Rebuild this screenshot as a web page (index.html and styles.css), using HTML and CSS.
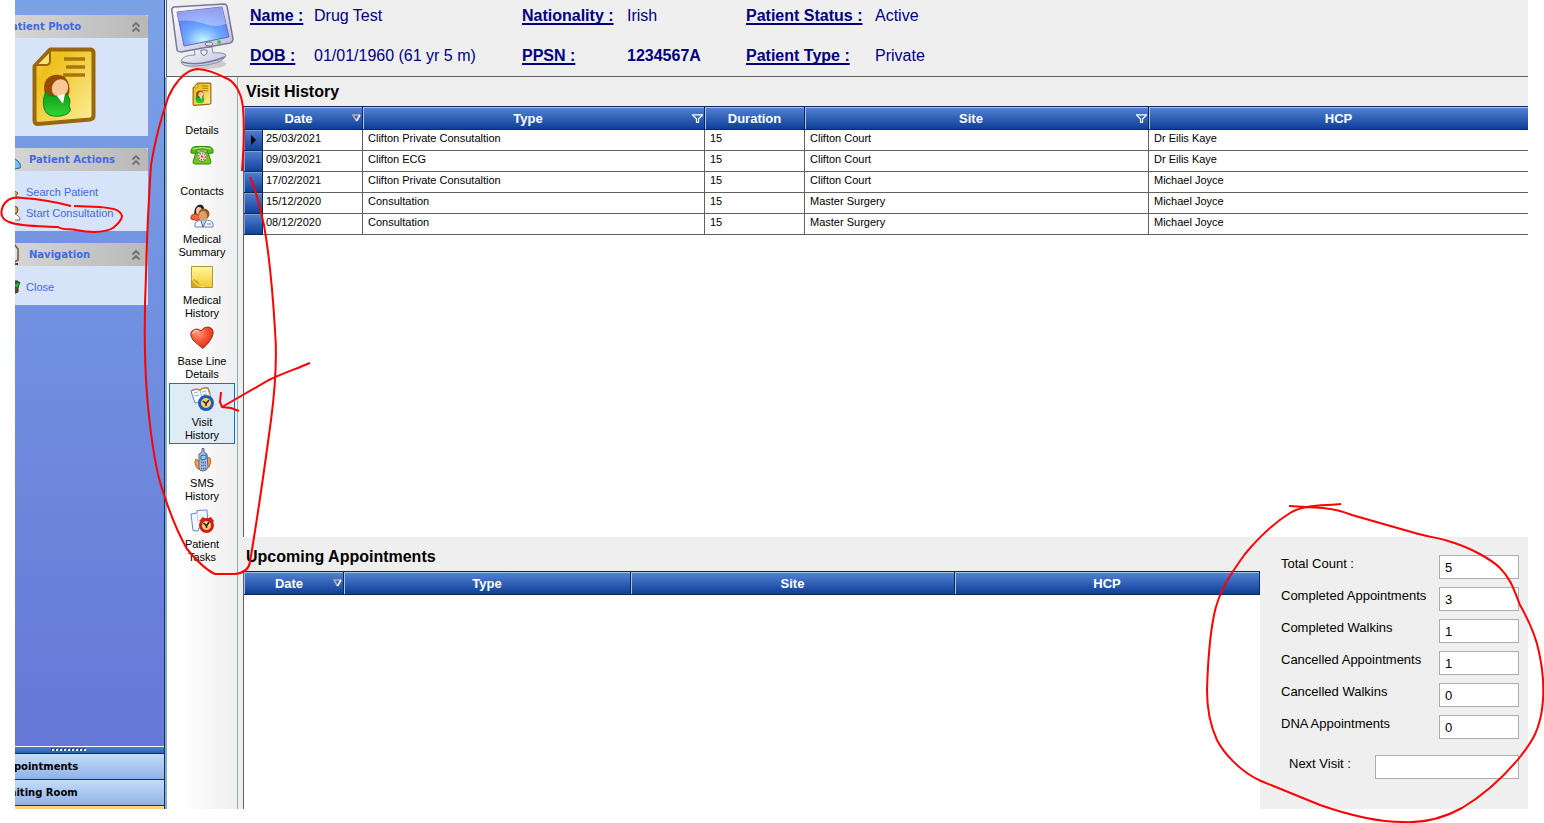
FILE: index.html
```html
<!DOCTYPE html>
<html lang="en">
<head>
    <meta charset="UTF-8">
    <meta name="viewport" content="width=device-width, initial-scale=1.0">
    <title>Patient - Visit History</title>
    <link rel="stylesheet" href="styles.css">
</head>
<body>
    <!-- shared icons -->
    <svg class="defs" width="0" height="0" aria-hidden="true">
        <defs>
            <linearGradient id="gold" x1="0" y1="0" x2="1" y2="1">
                <stop offset="0" stop-color="#f3cf3c"/><stop offset=".25" stop-color="#edc01c"/><stop offset="1" stop-color="#fdf0a0"/>
            </linearGradient>
            <linearGradient id="green" x1="0" y1="0" x2="0" y2="1">
                <stop offset="0" stop-color="#0a9a14"/><stop offset="1" stop-color="#35d435"/>
            </linearGradient>
            <linearGradient id="note" x1="0" y1="0" x2="0" y2="1">
                <stop offset="0" stop-color="#fff7a0"/><stop offset="1" stop-color="#f0cb2c"/>
            </linearGradient>
            <radialGradient id="screen" cx=".5" cy=".85" r=".9">
                <stop offset="0" stop-color="#c8f4ff"/><stop offset=".4" stop-color="#6aa5ff"/><stop offset="1" stop-color="#5560e8"/>
            </radialGradient>
            <linearGradient id="frame" x1="0" y1="0" x2="1" y2="1">
                <stop offset="0" stop-color="#ffffff"/><stop offset="1" stop-color="#bcbcdc"/>
            </linearGradient>
            <radialGradient id="red" cx=".35" cy=".3" r=".8">
                <stop offset="0" stop-color="#ff9a78"/><stop offset=".5" stop-color="#fa5030"/><stop offset="1" stop-color="#d02c10"/>
            </radialGradient>
        </defs>
        <symbol id="card" viewBox="0 0 64 80">
            <path d="M18 3.500H58Q61.500 3.500 61.500 7V70Q61.500 73 58 73.500L6 78Q2.500 78 2.500 74V20Z" fill="url(#gold)" stroke="#9a680c" stroke-width="4" stroke-linejoin="round"/>
            <path d="M18 5V15Q18 19 14 19H4Z" fill="#fbe272" stroke="#9a680c" stroke-width="2"/>
            <path d="M32 13H53M34 21H53M31 29H53" stroke="#a8770c" stroke-width="3.500"/>
            <path d="M13 49Q9 32 22 29Q34 27 37 39Q39 48 34 54Z" fill="#984a08"/>
            <ellipse cx="28" cy="42" rx="8" ry="9" fill="#f8c898" transform="rotate(25 28 42)"/>
            <path d="M14 46Q19 52 25 50L31 58L33 48Q40 51 37 60Q42 67 29 70Q14 72 12 62Q10 52 14 46Z" fill="url(#green)" stroke="#078a10"/>
            <path d="M25 50L33 48L31 58Z" fill="#fff"/>
        </symbol>
        <symbol id="up" viewBox="0 0 10 12">
            <path d="M1.500 5.500L5 2L8.500 5.500M1.500 10.500L5 7L8.500 10.500" fill="none" stroke="#707070" stroke-width="1.800"/>
        </symbol>
        <symbol id="filter" viewBox="0 0 11 9">
            <path d="M.5 .8H10.500L6.500 5V8.500H4.500V5Z" fill="none" stroke="#fff" stroke-width="1.200"/>
        </symbol>
        <symbol id="sort" viewBox="0 0 9 8">
            <path d="M8 1H1L4.500 7" fill="none" stroke="#b5b0a8" stroke-width="1.500"/>
            <path d="M8 1L4.500 7" fill="none" stroke="#fff" stroke-width="1.500"/>
        </symbol>
    </svg>

    <div class="app">
        <aside class="sidebar">
            <div class="panels">
                <section class="panel">
                    <h2><span>Patient Photo</span><svg class="up"><use href="#up"/></svg></h2>
                    <div class="photo"><svg width="64" height="80"><use href="#card"/></svg></div>
                </section>
                <section class="panel">
                    <h2 class="with-icon">
                        <svg width="22" height="22" viewBox="0 0 22 22"><path d="M0 19V12Q10 5 18 12Q22 16 20 19Q10 22 0 19Z" fill="#70c0f0" stroke="#28689c"/><circle cx="9" cy="6" r="5" fill="#e8b080"/></svg>
                        <span>Patient Actions</span><svg class="up"><use href="#up"/></svg>
                    </h2>
                    <div class="links">
                        <a href="#"><svg width="16" height="16" viewBox="0 0 16 16"><path d="M6 5L13 9L10 13Z" fill="#efa040" stroke="#805020"/><path d="M8 11L15 14H6Z" fill="#fff" stroke="#777"/></svg>Search Patient</a>
                        <a href="#"><svg width="16" height="16" viewBox="0 0 16 16"><circle cx="9" cy="5" r="4" fill="#d89860" stroke="#704020"/><path d="M5 14Q8 7 12 10Q16 12 15 15H5Z" fill="#fff" stroke="#777"/></svg>Start Consultation</a>
                    </div>
                </section>
                <section class="panel">
                    <h2 class="with-icon">
                        <svg width="22" height="22" viewBox="0 0 22 22"><path d="M4 3L14 0L18 5V16L14 18H4Z" fill="#c8e8ff" stroke="#7a5020" stroke-width="1.500"/><path d="M14 20H18" stroke="#444" stroke-width="2"/></svg>
                        <span>Navigation</span><svg class="up"><use href="#up"/></svg>
                    </h2>
                    <div class="links">
                        <a href="#"><svg width="16" height="16" viewBox="0 0 16 16"><path d="M8 2H13V13L8 15Z" fill="#704818" stroke="#333"/><path d="M9 5L15 3L13 9L10 8Z" fill="#28b838" stroke="#146020"/></svg>Close</a>
                    </div>
                </section>
            </div>
            <div class="modules">
                <div class="grip"></div>
                <button type="button">Appointments</button>
                <button type="button">Waiting Room</button>
                <div class="active-module"></div>
            </div>
        </aside>

        <main class="main">
            <header class="patient">
                <svg class="monitor" width="66" height="70" viewBox="0 -3 66 70">
                    <ellipse cx="34" cy="61" rx="21" ry="5" fill="#aaa" opacity=".5"/>
                    <path d="M10 58Q12 52 24 52L23 45L41 44L42 50Q55 49 55 53Q50 62 24 63Q10 64 10 58Z" fill="url(#frame)" stroke="#8c8cae"/>
                    <path d="M11 59Q28 64 54 54" fill="none" stroke="#77779c" stroke-width="1.500"/>
                    <path d="M30 47H36V50Q33 55 30 50Z" fill="#eee" stroke="#77779c"/>
                    <path d="M1 8Q0 5 3 4L53 1Q55 1 56 3L62 36Q62 39 59 40L10 49Q7 49 6 47Z" fill="url(#frame)" stroke="#77779c" stroke-width="1.500"/>
                    <path d="M6 9L51 4L58 34L13 43Z" fill="url(#screen)" stroke="#6868b8"/>
                    <path d="M6 9L51 4L55 21Q45 25 34 21Q20 16 8 18Z" fill="#fff" opacity=".35"/>
                    <ellipse cx="38" cy="41" rx="4" ry="2" fill="#ddd" stroke="#777"/>
                    <circle cx="48" cy="39" r="2" fill="#40c840"/>
                </svg>
                <dl>
                    <dt>Name :</dt><dd>Drug Test</dd>
                    <dt>Nationality :</dt><dd>Irish</dd>
                    <dt>Patient Status :</dt><dd>Active</dd>
                    <dt>DOB :</dt><dd>01/01/1960 (61 yr 5 m)</dd>
                    <dt>PPSN :</dt><dd class="strong">1234567A</dd>
                    <dt>Patient Type :</dt><dd>Private</dd>
                </dl>
            </header>

            <div class="body">
                <nav class="tabs">
                    <button type="button"><svg width="20" height="24"><use href="#card"/></svg><span>Details</span></button>
                    <button type="button">
                        <svg width="24" height="24" viewBox="0 0 24 24">
                            <path d="M6 9L18 9L21 19Q21 21 19 21H5Q3 21 3 19Z" fill="#6ccc1c" stroke="#2e8a08"/>
                            <path d="M1 10Q0 4 6 3.500H18Q24 4 23 10L18 10.500L17 7H7L6 10.500Z" fill="#58bc14" stroke="#2e8a08"/>
                            <path d="M3 6Q12 3 21 6" fill="none" stroke="#b8f078"/>
                            <circle cx="12" cy="13.500" r="5" fill="#f0ead8" stroke="#7c8048"/>
                            <circle cx="12" cy="13.500" r="3.300" fill="none" stroke="#86744c" stroke-width="1.600" stroke-dasharray="1.500 1"/>
                            <circle cx="12" cy="13.500" r="1.300" fill="#d05020"/>
                        </svg>
                        <span>Contacts</span>
                    </button>
                    <button type="button">
                        <svg width="24" height="24" viewBox="0 0 24 24">
                            <path d="M4 12Q4 1 10 .5Q16 1 14 11Z" fill="#222"/>
                            <ellipse cx="9" cy="7" rx="3" ry="4" fill="#f4c49a"/>
                            <path d="M1 15Q0 10 6 10L12 12V16Q5 17 1 15Z" fill="#f06838" stroke="#b43c14"/>
                            <path d="M5 23V19Q9 15 14 16Q23 16 23 20V23Z" fill="#f4f7ff" stroke="#7884a4"/>
                            <circle cx="14" cy="10" r="5.500" fill="#945c24"/>
                            <ellipse cx="13" cy="12" rx="4" ry="5" fill="#dda06c"/>
                            <path d="M11 17L13 23L16 17" fill="#b8dcff" stroke="#3a64a8"/>
                            <path d="M17 20H21" stroke="#6678a8"/>
                        </svg>
                        <span>Medical Summary</span>
                    </button>
                    <button type="button">
                        <svg width="24" height="24" viewBox="0 0 24 24">
                            <path d="M1.500 1.500H22.500V22.500H1.500Z" fill="url(#note)" stroke="#b09440"/>
                            <path d="M2 11Q3 15 8 16Q9 20 15 22H2Z" fill="#d9a81c"/>
                            <path d="M2 12Q3 20 14 22" fill="none" stroke="#fff09a"/>
                        </svg>
                        <span>Medical History</span>
                    </button>
                    <button type="button">
                        <svg width="24" height="24" viewBox="0 0 24 24">
                            <path d="M13 22.500Q8 19 3 14Q-1 8 2 5Q7 1 11 5Q13 1 18 1Q24 2 23 8Q22 14 13 22.500Z" fill="url(#red)" stroke="#8e3420"/>
                            <path d="M3 8Q4 4 8 5" fill="none" stroke="#ffc8b0" stroke-width="1.500"/>
                        </svg>
                        <span>Base Line Details</span>
                    </button>
                    <button type="button" class="selected">
                        <svg width="24" height="24" viewBox="0 0 24 24">
                            <path d="M1 4Q5 1 10 3Q13 0 18 1L22 14Q17 13 13 17Q9 14 5 16Z" fill="#f7fbff" stroke="#5d87bf"/>
                            <path d="M10 3L13 15M4 6L8 5M4.500 9L9 8M12 5L16 4M13 8L17 7" fill="none" stroke="#8fb5e0"/>
                            <path d="M1 4Q5 1 10 3Q13 0 18 1L20 7" fill="none" stroke="#c08a38" stroke-width="1.500"/>
                            <circle cx="16" cy="16" r="6.500" fill="#f6cf68" stroke="#2458c0" stroke-width="3"/>
                            <path d="M13 14L16 16.500L19 13M16 16.500V19" fill="none" stroke="#222" stroke-width="1.500"/>
                        </svg>
                        <span>Visit History</span>
                    </button>
                    <button type="button">
                        <svg width="24" height="24" viewBox="0 0 24 24">
                            <path d="M5 14L6 11L9 13L17 9L20 10Q22 14 19 19Q14 23 8 21Q5 18 5 14Z" fill="#efa050" stroke="#bb6820"/>
                            <path d="M9 6L12 4V0.500H14V4L17 6L18 19Q17 23 13 23Q9 23 9 20Z" fill="#a8bcdc" stroke="#536c98"/>
                            <path d="M11 7.500L16 7V11L11 12Z" fill="#80d8ff" stroke="#41669c"/>
                            <path d="M11 14.500H16M11 17.500H16M11 20.500H16" stroke="#53698e" stroke-width="1.500" stroke-dasharray="1.300 .6"/>
                        </svg>
                        <span>SMS History</span>
                    </button>
                    <button type="button">
                        <svg width="24" height="24" viewBox="0 0 24 24">
                            <path d="M1 5L7 4V1.500L17 1L18 18L9 19L8 22L3 21.500Z" fill="#f4f8ff" stroke="#6588c8"/>
                            <path d="M7 4L8 13" stroke="#b8cce8"/>
                            <path d="M9 12L13 8L16 10L21 8L24 12L22 15Z" fill="#d82018"/>
                            <circle cx="16.500" cy="16.500" r="6" fill="#ffd070" stroke="#cc2018" stroke-width="3"/>
                            <path d="M13.500 14L16.500 17L19 13M16.500 17V19" fill="none" stroke="#222" stroke-width="1.500"/>
                        </svg>
                        <span>Patient Tasks</span>
                    </button>
                </nav>

                <div class="content">
                    <section class="visits">
                        <h1>Visit History</h1>
                        <table class="grid">
                            <colgroup><col class="w-mark"><col class="w-date"><col class="w-type"><col class="w-duration"><col class="w-site"><col></colgroup>
                            <thead>
                                <tr>
                                    <th colspan="2"><div><span>Date</span><svg width="9" height="8"><use href="#sort"/></svg></div></th>
                                    <th><div><span>Type</span><svg width="11" height="9"><use href="#filter"/></svg></div></th>
                                    <th><div><span>Duration</span></div></th>
                                    <th><div><span>Site</span><svg width="11" height="9"><use href="#filter"/></svg></div></th>
                                    <th><div><span>HCP</span></div></th>
                                </tr>
                            </thead>
                            <tbody>
                                <tr><td class="mark"><svg width="5" height="10" viewBox="0 0 5 10"><path d="M0 0L5 5L0 10Z"/></svg></td><td class="date">25/03/2021</td><td>Clifton Private Consutaltion</td><td>15</td><td>Clifton Court</td><td>Dr Eilis Kaye</td></tr>
                                <tr><td class="mark"></td><td class="date">09/03/2021</td><td>Clifton ECG</td><td>15</td><td>Clifton Court</td><td>Dr Eilis Kaye</td></tr>
                                <tr><td class="mark"></td><td class="date">17/02/2021</td><td>Clifton Private Consutaltion</td><td>15</td><td>Clifton Court</td><td>Michael Joyce</td></tr>
                                <tr><td class="mark"></td><td class="date">15/12/2020</td><td>Consultation</td><td>15</td><td>Master Surgery</td><td>Michael Joyce</td></tr>
                                <tr><td class="mark"></td><td class="date">08/12/2020</td><td>Consultation</td><td>15</td><td>Master Surgery</td><td>Michael Joyce</td></tr>
                            </tbody>
                        </table>
                    </section>

                    <div class="lower">
                        <section class="upcoming">
                            <h1>Upcoming Appointments</h1>
                            <table class="grid">
                                <colgroup><col class="w-date"><col class="w-up-type"><col class="w-up-site"><col></colgroup>
                                <thead>
                                    <tr>
                                        <th><div><span>Date</span><svg width="9" height="8"><use href="#sort"/></svg></div></th>
                                        <th><div><span>Type</span></div></th>
                                        <th><div><span>Site</span></div></th>
                                        <th><div><span>HCP</span></div></th>
                                    </tr>
                                </thead>
                            </table>
                        </section>
                        <form class="stats">
                            <div class="row"><label for="total">Total Count :</label><input id="total" type="text" value="5" readonly></div>
                            <div class="row"><label for="compApp">Completed Appointments</label><input id="compApp" type="text" value="3" readonly></div>
                            <div class="row"><label for="compWalk">Completed Walkins</label><input id="compWalk" type="text" value="1" readonly></div>
                            <div class="row"><label for="cancApp">Cancelled Appointments</label><input id="cancApp" type="text" value="1" readonly></div>
                            <div class="row"><label for="cancWalk">Cancelled Walkins</label><input id="cancWalk" type="text" value="0" readonly></div>
                            <div class="row"><label for="dna">DNA Appointments</label><input id="dna" type="text" value="0" readonly></div>
                            <div class="row next"><label for="next">Next Visit :</label><input id="next" type="text" readonly></div>
                        </form>
                    </div>
                </div>
            </div>
        </main>
    </div>

    <!-- pen marks over the screen -->
    <svg class="marks" width="1544" height="823" viewBox="0 0 1544 823" aria-hidden="true">
        <path d="M71 206C52 201 40 199 23 198C12 196 6 200 3 206C0 213 1 219 9 222C22 227 42 226 58 227C64 231 70 228 76 230C92 233 104 233 113 228C119 223 122 219 122 216C120 208 108 208 100 207L74 206"/>
        <path d="M242 171C244 145 244 120 243 108C242 95 236 83 228 79C217 74 207 69 197 69C183 70 172 88 168 98C160 121 155 140 151 165C149 195 147 230 146 275C144 320 144 355 147 395C150 430 154 460 160 482C169 512 179 535 187 549C197 561 206 570 215 574H235C244 573 249 569 250 562C257 520 265 465 271 420C275 390 277 355 275 330C272 280 268 248 264 225C260 207 256 189 250 177"/>
        <path d="M310 363C296 369 281 374 269 380L222 407M221 392L220 402L222 407L231 408L239 411"/>
        <path d="M1289 506L1323 508C1335 509 1345 512 1352 515L1415 533C1428 537 1440 538 1448 541C1470 547 1492 560 1500 568C1511 579 1514 590 1520 605C1528 619 1536 637 1539 652C1543 670 1544 685 1543 700C1541 730 1531 743 1520 757C1502 779 1482 796 1462 808C1442 819 1422 823 1403 822C1375 822 1340 812 1320 805L1261 781C1240 772 1223 752 1217 740C1209 723 1207 705 1207 690C1208 657 1211 630 1214 615C1219 590 1232 572 1245 554C1259 537 1274 523 1290 513C1305 504 1325 506 1341 504"/>
    </svg>
</body>
</html>
```

FILE: styles.css
```css
* {
    box-sizing: border-box;
}
body {
    margin: 0;
    background: #fff;
    font-family: "Liberation Sans", Arial, sans-serif;
    font-size: 11px;
    color: #000;
}
h1, h2, dl, dd {
    margin: 0;
}
button {
    font: inherit;
    color: inherit;
    cursor: pointer;
}
.defs {
    position: absolute;
}
.app {
    display: flex;
    min-height: calc(100vh - 14px);
    margin: 0 16px 14px 15px;
}

/* left side */
.sidebar {
    display: flex;
    flex-direction: column;
    justify-content: space-between;
    flex: 0 0 150px;
    overflow: hidden;
    background: linear-gradient(#7ba2e7, #6375d6);
    border-right: 1px solid #002d96;
}
.panels {
    display: flex;
    flex-direction: column;
    gap: 12px;
    margin-left: -25px;
    padding: 15px 16px 0 10px;
}
.panel {
    background: #d7e3f8;
}
.panel h2 {
    display: flex;
    align-items: center;
    gap: 7px;
    height: 23px;
    padding: 0 7px 0 4px;
    background: linear-gradient(90deg, #d8d8d8, #b8b8b8);
    border-radius: 0 3px 0 0;
    font: bold 10px "DejaVu Sans", Verdana, sans-serif;
    color: #4169e1;
}
.panel h2 span {
    flex: 1;
    white-space: nowrap;
}
.panel h2.with-icon {
    padding-left: 0;
}
.up {
    width: 10px;
    height: 12px;
}
.photo {
    height: 98px;
    padding: 8px 0 0 32px;
}
.links {
    display: flex;
    flex-direction: column;
    gap: 5px;
    padding: 13px 0 10px 5px;
}
.links a {
    display: flex;
    align-items: center;
    gap: 5px;
    height: 16px;
    color: #4169e1;
    text-decoration: none;
}
.modules {
    border-top: 1px solid #fff;
}
.grip {
    height: 7px;
    padding: 1px 0 0 36px;
    background: linear-gradient(#4a7fcf, #2f5fb5);
    border-bottom: 1px solid #002d96;
}
.grip::before {
    content: "";
    display: block;
    width: 35px;
    height: 3px;
    background:
        repeating-linear-gradient(90deg, transparent 0 1px, #fff 1px 3px, transparent 3px 4px) 0 1px / 100% 2px no-repeat,
        repeating-linear-gradient(90deg, #1c3a80 0 2px, transparent 2px 4px);
}
.modules button {
    display: block;
    width: calc(100% + 25px);
    height: 26px;
    margin-left: -25px;
    padding: 0 9px;
    background: linear-gradient(#c5dcf9, #8fb2e7);
    border: 0;
    border-bottom: 1px solid #002d96;
    font: bold 10px "DejaVu Sans", Verdana, sans-serif;
    text-align: left;
}
.active-module {
    height: 3px;
    background: #ffd47a;
}

/* patient header */
.main {
    display: flex;
    flex-direction: column;
    flex: 1;
    min-width: 0;
    background: #efefef;
}
.patient {
    display: flex;
    gap: 13px;
    height: 77px;
    margin-left: 1px;
    padding-left: 4px;
    border-left: 1px solid #606060;
    border-bottom: 1px solid #606060;
}
.patient dl {
    display: grid;
    grid-template-columns: 64px 208px 105px 119px 129px auto;
    grid-auto-rows: 20px;
    row-gap: 20px;
    padding-top: 6px;
    font-size: 16px;
    line-height: 20px;
    color: #00007f;
    white-space: nowrap;
}
.patient dt {
    font-weight: bold;
    text-decoration: underline;
    text-decoration-thickness: 2px;
    text-decoration-skip-ink: none;
    text-underline-offset: 2px;
}
.patient .strong {
    font-weight: bold;
}
.body {
    display: flex;
    flex: 1;
}

/* icon bar */
.tabs {
    flex: 0 0 73px;
    margin-right: 5px;
    padding: 1px 2px;
    background: linear-gradient(90deg, #fff 20%, #efefef);
    border: solid #93adad;
    border-width: 0 1px 0 2px;
}
.tabs button {
    display: flex;
    flex-direction: column;
    align-items: center;
    justify-content: space-between;
    width: 66px;
    height: 61px;
    padding: 3px 4px 1px;
    background: none;
    border: 1px solid transparent;
    line-height: 13px;
}
.tabs button.selected {
    background: #dfebf5;
    border-color: #0078d7;
}

/* grids */
.content {
    display: flex;
    flex-direction: column;
    flex: 1;
    min-width: 0;
}
.content h1 {
    padding-left: 3px;
    background: #efefef;
    font-size: 16px;
    line-height: 29px;
}
.visits {
    flex: 1;
}
.visits, .upcoming {
    display: flex;
    flex-direction: column;
    background: #fff;
}
.visits::after, .upcoming::after {
    content: "";
    flex: 1;
    border-left: 1px solid #606060;
}
.grid {
    width: 100%;
    table-layout: fixed;
    border-spacing: 0;
    border-left: 1px solid #606060;
}
.w-mark { width: 19px; }
.w-date { width: 100px; }
.w-type { width: 342px; }
.w-duration { width: 100px; }
.w-site { width: 344px; }
.w-up-type { width: 287px; }
.w-up-site { width: 324px; }
.grid th {
    height: 24px;
    padding: 0 1px;
    background: linear-gradient(#5584d4, #0d3f99);
    border: solid #10294f;
    border-width: 1px 1px 1px 0;
    box-shadow: inset 1px 1px #a8c0ea;
    font-size: 13px;
    color: #fff;
}
.grid th div {
    display: flex;
    align-items: center;
}
.grid th span {
    flex: 1;
}
.grid td {
    height: 21px;
    padding: 2px 5px 0;
    border: solid #606060;
    border-width: 0 1px 1px 0;
    line-height: 13px;
    vertical-align: top;
}
.grid td:last-child, .visits th:last-child {
    border-right: 0;
}
.grid td.date {
    padding-left: 3px;
}
.grid td.mark {
    padding: 5px 0 0 7px;
    background: linear-gradient(#4f7fd0, #11439c);
    border-color: #10294f;
    box-shadow: inset 1px 1px #7f9fd8;
    line-height: 0;
}

/* lower part */
.lower {
    display: flex;
}
.upcoming {
    flex: 1;
    min-width: 0;
}
.stats {
    display: flex;
    flex-direction: column;
    gap: 8px;
    flex: 0 0 268px;
    padding: 18px 9px 30px 21px;
    font-size: 13px;
}
.upcoming h1 {
    padding-top: 5px;
}
.row {
    display: flex;
    justify-content: space-between;
    line-height: 18px;
}
.row input {
    width: 80px;
    height: 24px;
    padding: 0 5px;
    background: #fff;
    border: 1px solid #abadb3;
    font: inherit;
}
.row.next {
    margin-top: 8px;
    padding-left: 8px;
}
.row.next input {
    width: 144px;
}

.marks {
    position: absolute;
    top: 0;
    left: 0;
    fill: none;
    stroke: #f00;
    stroke-width: 2;
    pointer-events: none;
}
```
